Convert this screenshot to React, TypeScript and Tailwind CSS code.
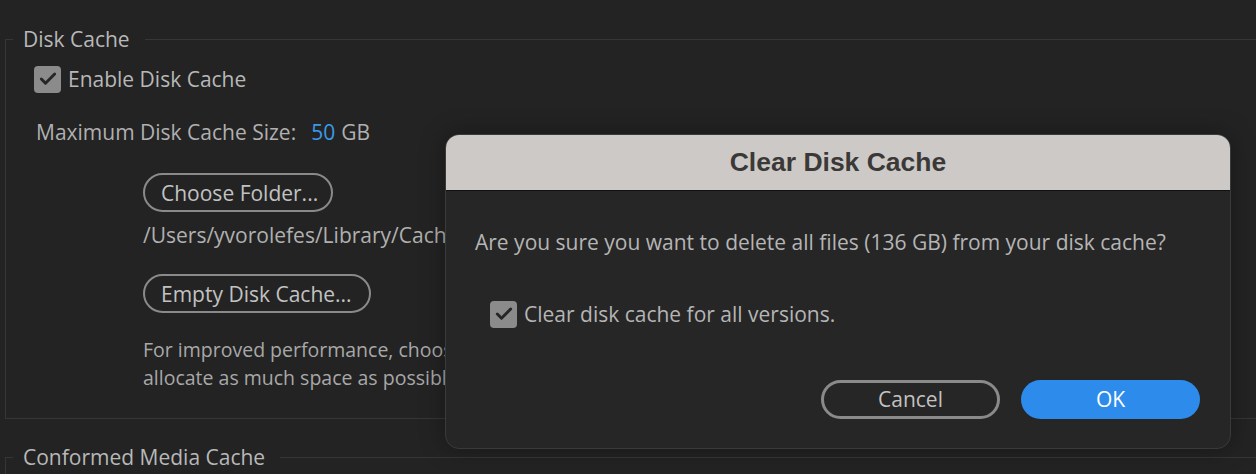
import { Check } from "lucide-react";

const font = { fontFamily: '"Open Sans", "Noto Sans", sans-serif' };

const CheckBox = () => (
  <span className="flex h-[27px] w-[27px] shrink-0 items-center justify-center rounded-[4px] bg-[#8b8b8b]">
    <Check size={20} strokeWidth={3.5} className="text-[#262626]" />
  </span>
);

const PillButton = ({ label, width }: { label: string; width: string }) => (
  <button
    className={`flex h-[39px] ${width} items-center rounded-full border-2 border-[#8a8a8a] pl-[16px] text-[21px] leading-[28px] text-[#c2c2c2]`}
  >
    {label}
  </button>
);

const ClearCacheDialog = () => (
  <div className="absolute left-[445px] top-[134px] flex h-[315px] w-[786px] flex-col overflow-hidden rounded-[14px] border border-[#3a3a3a] bg-[#262626] shadow-[0_0_24px_rgba(0,0,0,0.35)]">
    <div className="flex h-[56px] shrink-0 items-center justify-center border-b border-[#111] bg-[#cdc9c6]">
      <span
        className="text-[26.5px] font-bold text-[#3b3938]"
        style={{ fontFamily: '"Liberation Sans", Arial, sans-serif' }}
      >
        Clear Disk Cache
      </span>
    </div>
    <div className="flex flex-1 flex-col px-[29px] pt-[34px]">
      <p className="text-[21px] leading-[34px] text-[#b5b5b5]">
        Are you sure you want to delete all files (136 GB) from your disk cache?
      </p>
      <div className="mt-[41px] flex items-center gap-[7px] pl-[15px]">
        <CheckBox />
        <span className="text-[21px] leading-[28px] text-[#b5b5b5]">
          Clear disk cache for all versions.
        </span>
      </div>
      <div className="mt-[52px] flex justify-end gap-[21px] pr-[1px]">
        <button className="flex h-[39px] w-[179px] items-center justify-center rounded-full border-[3px] border-[#8a8a8a] text-[21px] text-[#c2c2c2]">
          Cancel
        </button>
        <button className="flex h-[39px] w-[179px] items-center justify-center rounded-full bg-[#2d8ceb] text-[21px] text-white">
          OK
        </button>
      </div>
    </div>
  </div>
);

export default function App() {
  return (
    <div
      className="relative h-[474px] w-[1256px] overflow-hidden bg-[#232323] pt-[25px]"
      style={font}
    >
      <fieldset className="ml-[5px] h-[394px] border-y border-l border-[#363636]">
        <legend className="ml-[7px] px-[10px] pr-[15px] text-[21px] leading-[28px] text-[#b8b8b8]">
          Disk Cache
        </legend>
        <div className="pl-[28px]">
          <div className="mt-[12px] flex items-center gap-[7px]">
            <CheckBox />
            <span className="text-[21px] leading-[28px] text-[#b8b8b8]">Enable Disk Cache</span>
          </div>
          <div className="mt-[25px] flex items-center pl-[2px] text-[21px] leading-[28px]">
            <span className="text-[#b0b0b0]">Maximum Disk Cache Size:</span>
            <span className="ml-[15px] text-[#3a9ae8]">50</span>
            <span className="ml-[6px] text-[#b0b0b0]">GB</span>
          </div>
          <div className="ml-[109px] mt-[27px] flex flex-col items-start">
            <PillButton label="Choose Folder..." width="w-[190px]" />
            <div className="mt-[9px] w-[302px] overflow-hidden whitespace-nowrap text-[21px] leading-[28px] text-[#b0b0b0]">
              /Users/yvorolefes/Library/Caches/Adobe/Common
            </div>
            <div className="mt-[25px]">
              <PillButton label="Empty Disk Cache..." width="w-[228px]" />
            </div>
            <div className="mt-[23px] w-[302px] overflow-hidden whitespace-nowrap text-[19.5px] leading-[28px] text-[#a8a8a8]">
              <div>For improved performance, choose a fast drive and</div>
              <div>allocate as much space as possible.</div>
            </div>
          </div>
        </div>
      </fieldset>
      <fieldset className="ml-[5px] mt-[24px] h-[60px] border-l border-t border-[#363636]">
        <legend className="ml-[7px] px-[10px] pr-[15px] text-[21px] leading-[28px] text-[#b8b8b8]">
          Conformed Media Cache
        </legend>
      </fieldset>
      <ClearCacheDialog />
    </div>
  );
}
